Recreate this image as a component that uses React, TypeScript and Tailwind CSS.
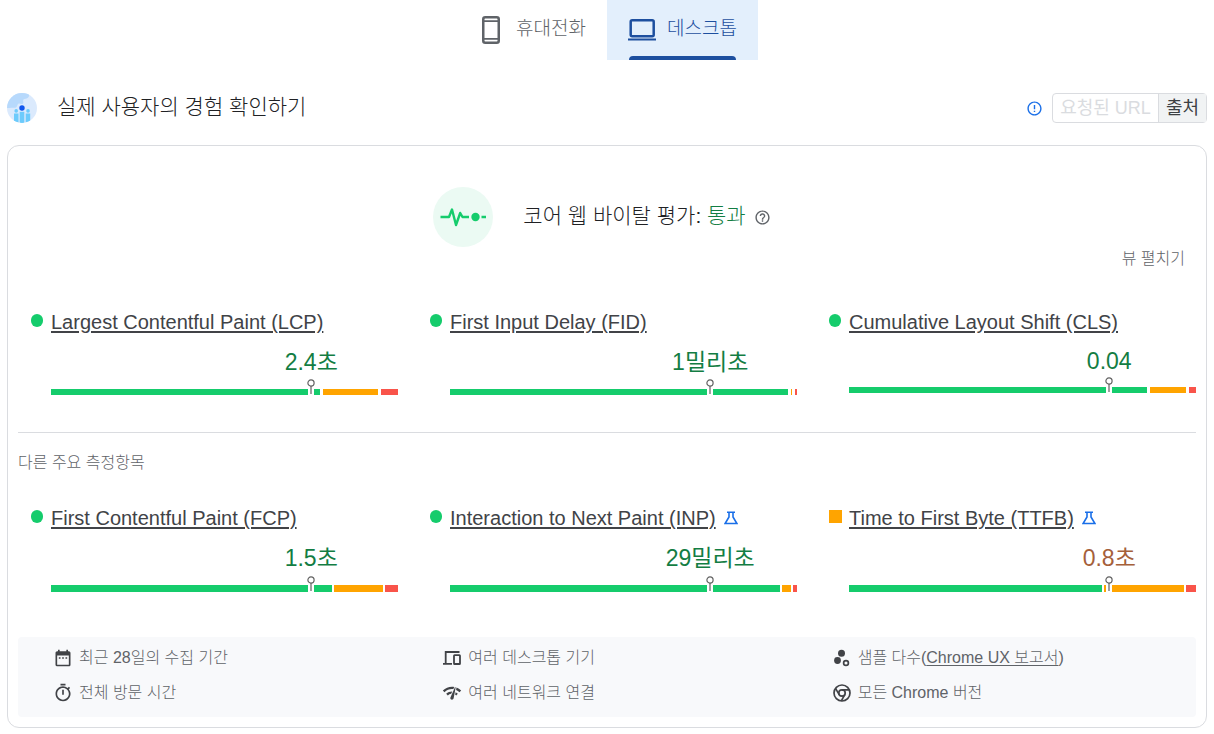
import { useState } from 'react';
import { clsx } from 'clsx';
import { MdDateRange, MdErrorOutline, MdHelpOutline, MdNetworkCheck, MdOutlineTimer } from 'react-icons/md';

type Rating = 'good' | 'average';

type Metric = {
    name: string;
    value: string;
    unit?: string;
    rating: Rating;
    experimental?: boolean;
    // share of visits: good, needs improvement, poor
    distribution: [number, number, number];
};

const coreMetrics: Metric[] = [
    { name: 'Largest Contentful Paint (LCP)', value: '2.4', unit: '초', rating: 'good', distribution: [268, 55, 17] },
    { name: 'First Input Delay (FID)', value: '1', unit: '밀리초', rating: 'good', distribution: [339, 1, 2] },
    { name: 'Cumulative Layout Shift (CLS)', value: '0.04', rating: 'good', distribution: [299, 36, 7] },
];

const otherMetrics: Metric[] = [
    { name: 'First Contentful Paint (FCP)', value: '1.5', unit: '초', rating: 'good', distribution: [280, 49, 13] },
    { name: 'Interaction to Next Paint (INP)', value: '29', unit: '밀리초', rating: 'good', experimental: true, distribution: [330, 9, 4] },
    { name: 'Time to First Byte (TTFB)', value: '0.8', unit: '초', rating: 'average', experimental: true, distribution: [253, 80, 10] },
];

const PhoneIcon = () => (
    <svg width="18" height="28" viewBox="0 0 18 28" fill="none" stroke="currentColor" aria-hidden="true">
        <rect x="1.250" y="1.250" width="15.500" height="25.500" rx="2" strokeWidth="2.500" />
        <path d="M2 5.200h14M2 22.800h14" strokeWidth="1.800" />
    </svg>
);

const LaptopIcon = () => (
    <svg width="28" height="22" viewBox="0 0 28 22" fill="none" stroke="currentColor" aria-hidden="true">
        <rect x="2.700" y="1.300" width="23" height="16" rx="1.500" strokeWidth="2.500" />
        <path d="M0 20.500h28" strokeWidth="2" />
    </svg>
);

const UsersIcon = () => (
    <svg width="30" height="30" viewBox="0 0 30 30" className="shrink-0" aria-hidden="true">
        <defs>
            <clipPath id="usersClip"><circle cx="15" cy="15" r="15" /></clipPath>
        </defs>
        <g clipPath="url(#usersClip)">
            <rect width="30" height="30" fill="#dbeafd" />
            <path d="M0 0h22c.5 2.500 0 4-1.500 5-1 1-3 .5-4 1.500-1 1.500.5 3-.5 4-1.500 1.500-3-.5-4.500 0-1.500 1-1 3-2.500 4-2 1-4-.5-6 .5H0z" fill="#b7d9fc" />
            <g fill="#6ccbfc">
                <rect x="7" y="20.500" width="4.500" height="10" />
                <rect x="12.700" y="18.800" width="4.600" height="12" />
                <rect x="18.700" y="20.500" width="4.500" height="10" />
                <circle cx="9.200" cy="17.900" r="1.800" />
                <circle cx="21" cy="17.900" r="1.800" />
            </g>
            <circle cx="15" cy="15" r="2.700" fill="#1257ee" />
        </g>
    </svg>
);

const PulseIcon = () => (
    <svg width="60" height="60" viewBox="0 0 60 60" fill="none" className="shrink-0" aria-hidden="true">
        <circle cx="30" cy="30" r="30" fill="#ebfaf3" />
        <path d="M7.500 30h8.500l3-7.500 4 15.500 4.200-12 2.300 4h6.500M48.500 30h4.500" stroke="#15cc6c" strokeWidth="2.400" strokeLinejoin="round" />
        <circle cx="42.500" cy="30" r="4.200" fill="#15cc6c" />
    </svg>
);

const FlaskIcon = () => (
    <svg width="14" height="14" viewBox="0 0 14 14" fill="none" stroke="#1a6fe8" strokeWidth="1.600" className="shrink-0" role="img" aria-label="실험용">
        <path d="M3 1.300h8M5 1.300v4.700L1.100 12.500h11.800L9 6V1.300" />
    </svg>
);

const DevicesIcon = () => (
    <svg width="18" height="14" viewBox="0 0 18 14" fill="none" stroke="currentColor" strokeWidth="1.800" aria-hidden="true">
        <path d="M16.500 1H2.700v11.500M0 12.900h9" />
        <rect x="11" y="4.200" width="6" height="8.800" rx=".6" />
    </svg>
);

const SamplesIcon = () => (
    <svg width="18" height="18" viewBox="0 0 18 18" fill="currentColor" aria-hidden="true">
        <circle cx="8.500" cy="4.300" r="3.500" />
        <circle cx="4.500" cy="11.500" r="3.400" />
        <circle cx="13" cy="14" r="2.400" fill="none" stroke="currentColor" strokeWidth="1.700" />
    </svg>
);

const ChromeIcon = () => (
    <svg width="18" height="18" viewBox="0 0 18 18" fill="none" stroke="currentColor" strokeWidth="1.700" aria-hidden="true">
        <circle cx="9" cy="9" r="8" />
        <circle cx="9" cy="9" r="3.200" />
        <path d="M9 5.800h7.200M6.200 10.600L2.500 4.400M11.800 10.600L8.300 16.900" />
    </svg>
);

const MetricItem = ({ metric, barClass }: { metric: Metric; barClass: string }) => {
    const [good, average, poor] = metric.distribution;

    return (
        <div className="flex gap-2">
            <span
                className={clsx(
                    "mt-1 shrink-0",
                    metric.rating === 'good' ? "w-3 h-[13px] rounded-full bg-[#15cc6c]" : "w-[13px] h-[13px] -mr-px bg-[#ffa400]"
                )}
            />
            <div className="flex-1 min-w-0">
                <div className="flex items-center gap-2 h-6">
                    <a href="#metric" className="text-xl leading-6 text-[#414347] underline decoration-2 underline-offset-2 whitespace-nowrap">{metric.name}</a>
                    {metric.experimental && <FlaskIcon />}
                </div>
                {/* Value and pin both sit on the 75th percentile */}
                <div className="ml-[50%] w-1/2 mt-[15px] flex justify-center">
                    <span
                        className={clsx(
                            "text-[23px] whitespace-nowrap",
                            metric.unit ? "leading-[26px]" : "leading-6",
                            metric.rating === 'good' ? "text-[#137d43]" : "text-[#a5603a]"
                        )}
                    >
                        {metric.value}{metric.unit}
                    </span>
                </div>
                <div className={clsx("relative flex mt-3.5", barClass)}>
                    <div className="bg-[#15cc6c]" style={{ flex: `${good} 1 0` }} />
                    <div className="bg-[#ffa400]" style={{ flex: `${average} 1 0` }} />
                    <div className="bg-[#f9544a]" style={{ flex: `${poor} 1 0` }} />
                    <div className="absolute left-3/4 bottom-0 h-full w-1.5 -translate-x-1/2 bg-white" />
                    <svg width="8" height="16" viewBox="0 0 8 16" fill="none" stroke="#616161" strokeWidth="1.200" className="absolute left-3/4 bottom-0 -translate-x-1/2" aria-hidden="true">
                        <circle cx="4" cy="4" r="3.100" fill="#fff" />
                        <path d="M4 7v8" />
                    </svg>
                </div>
            </div>
        </div>
    );
};

const App = () => {
    const [device, setDevice] = useState('desktop');
    const [scope, setScope] = useState('origin');

    const tabs = [
        { id: 'mobile', label: '휴대전화', icon: <PhoneIcon /> },
        { id: 'desktop', label: '데스크톱', icon: <LaptopIcon /> },
    ];

    const details = [
        { icon: <MdDateRange size={20} />, text: '최근 28일의 수집 기간' },
        { icon: <DevicesIcon />, text: '여러 데스크톱 기기' },
        { icon: <SamplesIcon />, text: '샘플 다수(', link: 'Chrome UX 보고서' },
        { icon: <MdOutlineTimer size={20} />, text: '전체 방문 시간' },
        { icon: <MdNetworkCheck size={20} />, text: '여러 네트워크 연결' },
        { icon: <ChromeIcon />, text: '모든 Chrome 버전' },
    ];

    return (
        <div className="bg-white text-[#202124] px-[7px] pb-1.5 font-['Liberation_Sans','Noto_Sans_CJK_KR',sans-serif]">
            {/* Device tabs */}
            <div role="tablist" className="flex justify-center">
                {tabs.map((tab) => (
                    <button
                        key={tab.id}
                        role="tab"
                        aria-selected={device === tab.id}
                        onClick={() => setDevice(tab.id)}
                        className={clsx(
                            "relative flex items-center gap-2.5 w-[151px] h-[60px] text-[19px] font-light",
                            device === tab.id ? "bg-[#e3effc] text-[#1d4f9f]" : "text-[#5f6368]"
                        )}
                    >
                        <span className="flex justify-center w-[30px] ml-5">{tab.icon}</span>
                        <span className="-mt-0.5">{tab.label}</span>
                        {device === tab.id && <span className="absolute bottom-0 inset-x-[22px] h-1 rounded-t bg-[#1d4f9f]" />}
                    </button>
                ))}
            </div>

            {/* Section header */}
            <header className="flex items-center mt-8 h-8">
                <UsersIcon />
                <h1 className="ml-5 text-[21px] leading-8 font-light -mt-0.5">실제 사용자의 경험 확인하기</h1>
                <button aria-label="정보" className="ml-auto mr-[9px] text-[#1a6fe8]">
                    <MdErrorOutline size={17} />
                </button>
                <div className="flex h-[30px] border border-[#dadce0] rounded-sm text-lg leading-7">
                    <button disabled className="px-[7px] text-[#dadce0]">요청된 URL</button>
                    <button onClick={() => setScope('origin')} aria-pressed={scope === 'origin'} className="px-[7px] border-l border-[#dadce0] bg-[#f1f3f4] text-[#3c4043]">출처</button>
                </div>
            </header>

            <main className="mt-[21px] border border-[#dadce0] rounded-xl px-2.5 pb-2.5">
                {/* Assessment */}
                <div className="flex items-center justify-center mt-[41px] h-[60px] pr-2.5">
                    <PulseIcon />
                    <h2 className="ml-[30px] text-[21px] leading-8 font-light -mt-0.5">
                        코어 웹 바이탈 평가: <span className="text-[#137d43]">통과</span>
                    </h2>
                    <button aria-label="도움말" className="ml-2 text-[#5f6368]">
                        <MdHelpOutline size={17} />
                    </button>
                </div>
                <div className="flex justify-end pr-[11px]">
                    <button className="text-base leading-6 font-light text-[#5f6368]">뷰 펼치기</button>
                </div>

                <div className="grid grid-cols-3 gap-8 pl-[13px] mt-[39px] pb-[37px] border-b border-[#dadce0]">
                    {coreMetrics.map((metric) => (
                        <MetricItem key={metric.name} metric={metric} barClass="h-1.5 gap-[3px]" />
                    ))}
                </div>

                <h3 className="mt-[18px] text-base leading-6 font-light text-[#5f6368]">다른 주요 측정항목</h3>

                <div className="grid grid-cols-3 gap-8 pl-[13px] mt-[31px]">
                    {otherMetrics.map((metric) => (
                        <MetricItem key={metric.name} metric={metric} barClass="h-[7px] gap-0.5" />
                    ))}
                </div>

                {/* Collection details */}
                <ul className="grid grid-cols-3 gap-x-[25px] gap-y-[11px] mt-[45px] pl-[35px] pt-[9px] pb-3 bg-[#f8f9fb] rounded text-base leading-6 font-light text-[#5f6368]">
                    {details.map((item) => (
                        <li key={item.text} className="flex items-center gap-1.5">
                            <span className="flex justify-center w-5 shrink-0 text-[#414347]">{item.icon}</span>
                            <span>
                                {item.text}
                                {item.link && <><a href="#crux" className="underline underline-offset-2">{item.link}</a>)</>}
                            </span>
                        </li>
                    ))}
                </ul>
            </main>
        </div>
    );
};

export default App;
